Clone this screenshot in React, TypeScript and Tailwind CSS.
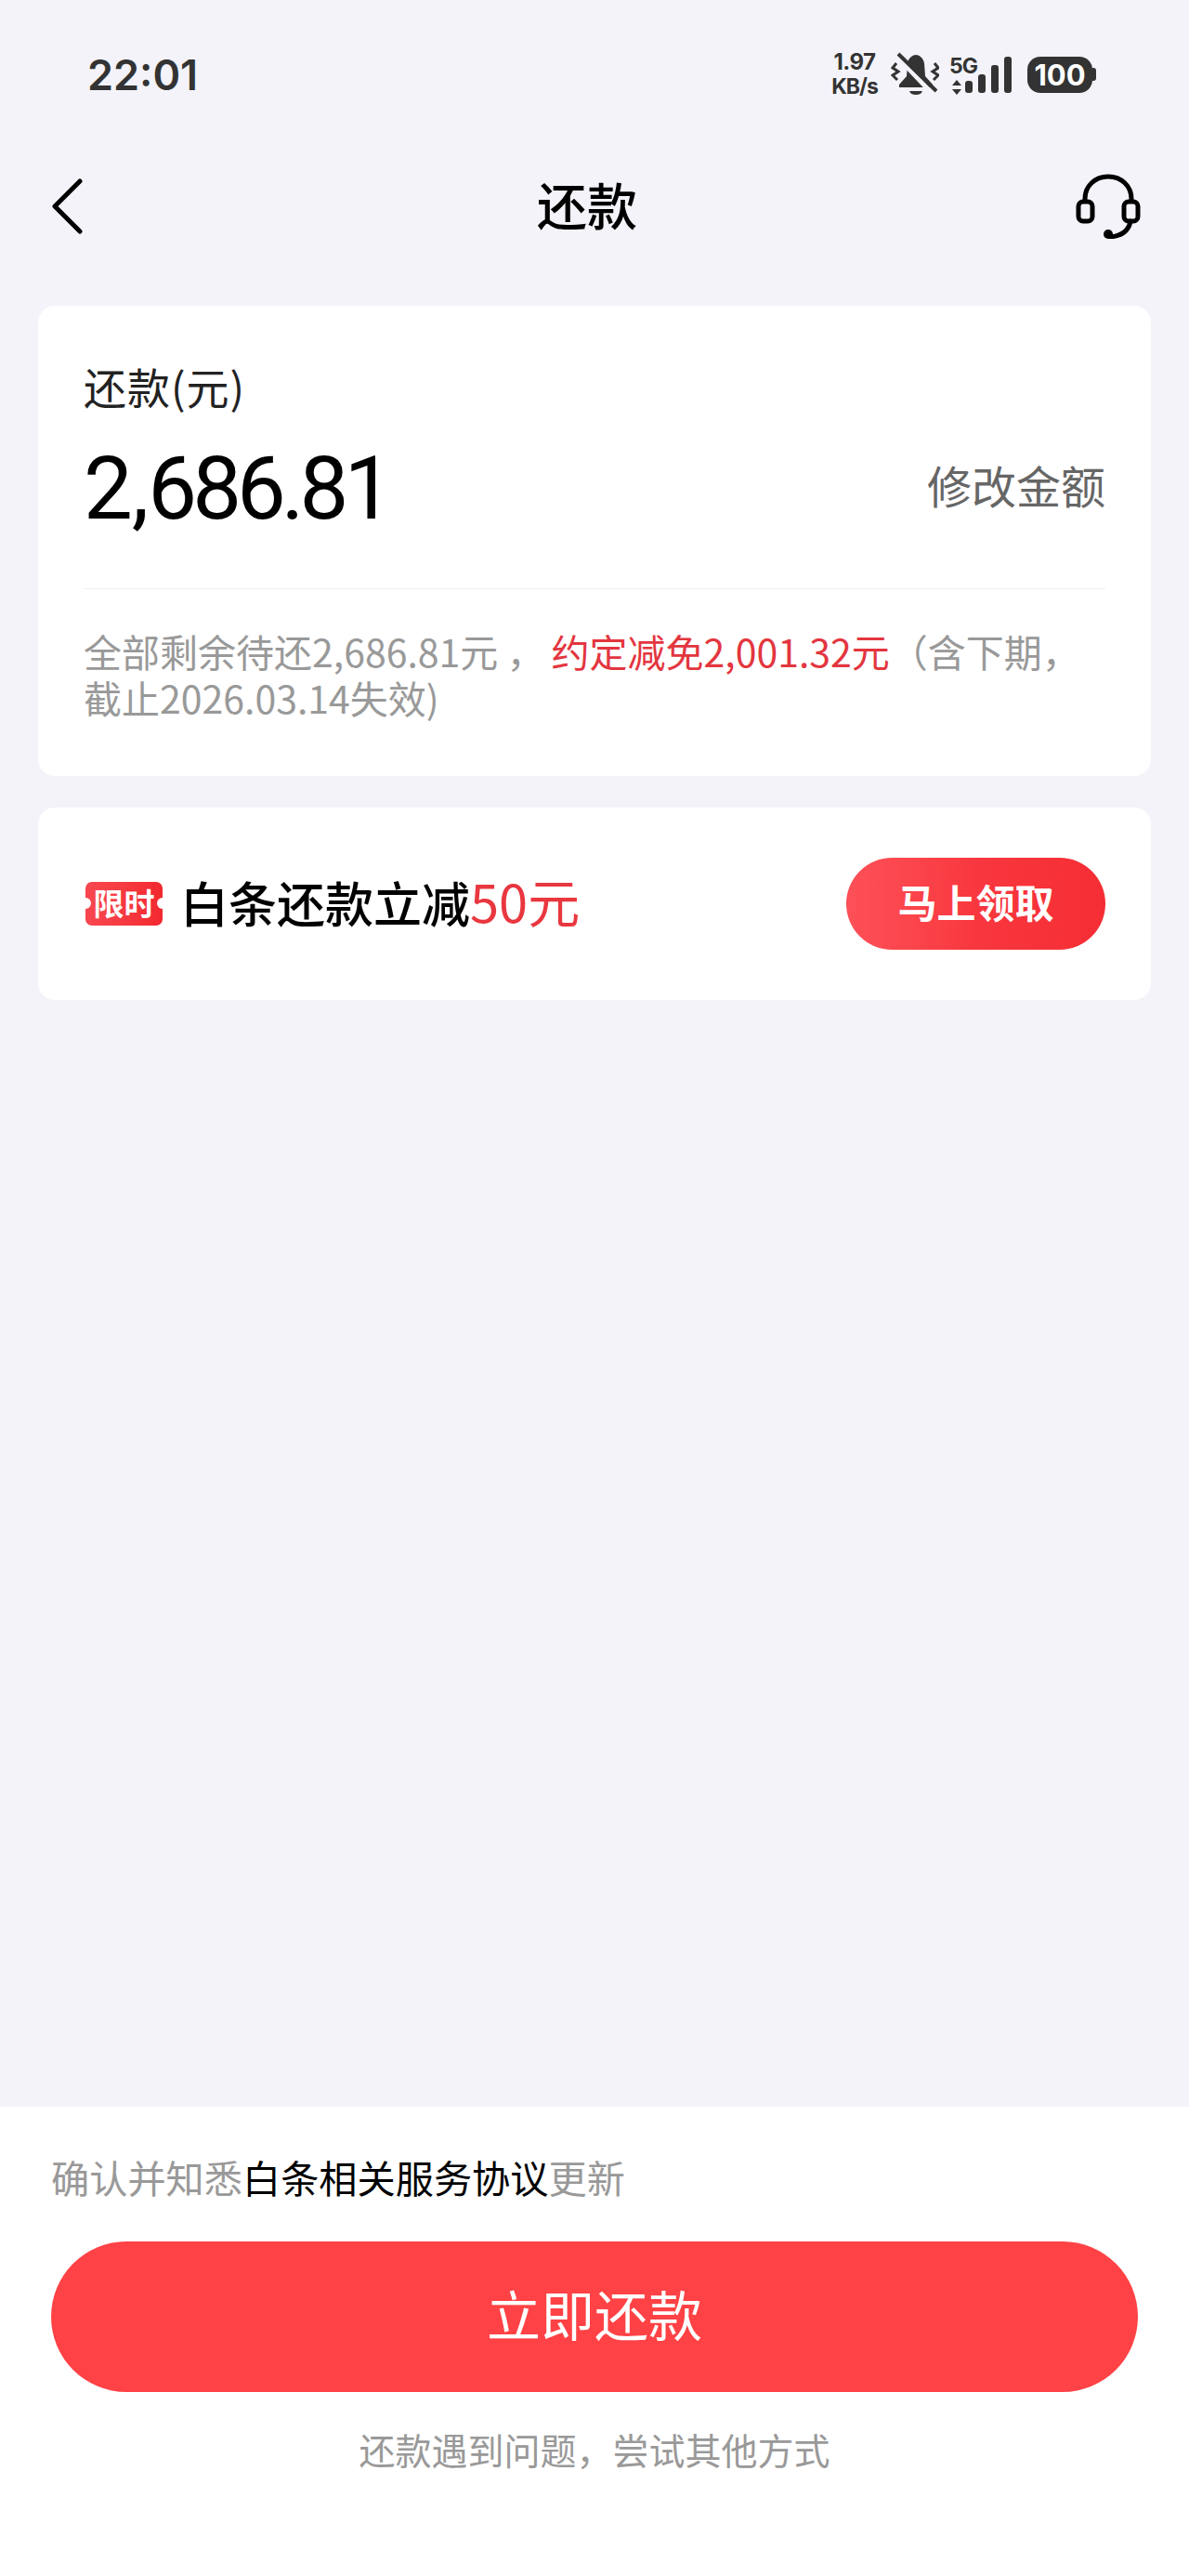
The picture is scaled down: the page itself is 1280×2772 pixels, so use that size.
const cjk = "font-['Noto_Sans_CJK_SC','Noto_Sans',sans-serif]";

function BellOff() {
  return (
    <svg width="52" height="48" viewBox="0 0 52 48" fill="none">
      <path d="M27 3c-3 0-8 3-9 9l-1 14-8 9v3h36v-3l-8-9-1-14c-1-6-6-9-9-9z" fill="#333" />
      <path d="M20 42h14c-1 3-4 4-7 4s-6-1-7-4z" fill="#333" />
      <path d="M3 1l41 43" stroke="#f3f3f9" strokeWidth="5" />
      <path d="M8 2l41 40" stroke="#333" strokeWidth="4" />
      <path d="M6 12l-4 5 6 4-6 4 5 5" stroke="#333" strokeWidth="3" />
      <path d="M47 12l4 5-6 4 6 4-5 5" stroke="#333" strokeWidth="3" />
    </svg>
  );
}

function Signal() {
  return (
    <div className="flex items-end gap-[6px] h-[40px]">
      <div className="w-[8px] h-[13px] rounded-[3px] bg-[#333]" />
      <div className="w-[8px] h-[20px] rounded-[3px] bg-[#333]" />
      <div className="w-[8px] h-[30px] rounded-[3px] bg-[#333]" />
      <div className="w-[8px] h-[39px] rounded-[3px] bg-[#333]" />
    </div>
  );
}

function StatusBar() {
  return (
    <div className="h-[160px] flex items-center justify-between pl-[94px] pr-[100px]">
      <span className="text-[45px] font-semibold text-[#333] font-['Inter',sans-serif] leading-none">22:01</span>
      <div className="flex items-center">
        <div className="w-[50px] flex flex-col items-center font-['Inter',sans-serif] font-bold text-[#333] leading-[26px]">
          <span className="text-[24px] tracking-[-0.5px]">1.97</span>
          <span className="text-[23px] tracking-[-1px] whitespace-nowrap">KB/s</span>
        </div>
        <div className="ml-[14px]">
          <BellOff />
        </div>
        <div className="ml-[11px] w-[17px] flex flex-col font-['Inter',sans-serif] font-bold text-[#333] text-[23px] leading-[24px] tracking-[-1px]">
          <span className="whitespace-nowrap">5G</span>
          <svg width="12" height="16" viewBox="0 0 12 16" className="mt-[3px] ml-[2px]">
            <path d="M6 0l5 6H1zM6 16l-5-6h10z" fill="#333" />
          </svg>
        </div>
        <Signal />
        <div className="ml-[17px] flex items-center">
          <div className="w-[70px] h-[39px] rounded-[14px] bg-[#333] flex items-center justify-center text-white font-['Inter',sans-serif] font-bold text-[31px] leading-none">
            100
          </div>
          <div className="w-[4px] h-[14px] rounded-r-[3px] bg-[#333]" />
        </div>
      </div>
    </div>
  );
}

function NavBar() {
  return (
    <div className="h-[124px] flex items-center justify-between pl-[54px] pr-[52px]">
      <svg width="36" height="60" viewBox="0 0 36 60" fill="none">
        <path d="M32 3L5 30l27 27" stroke="#000" strokeWidth="5" strokeLinecap="round" strokeLinejoin="round" />
      </svg>
      <span className={`${cjk} text-[54px] font-medium text-black leading-none ml-[16px] mb-[4px]`}>还款</span>
      <svg width="70" height="70" viewBox="0 0 70 70" fill="none" stroke="#000" strokeWidth="5">
        <path d="M10 30V27C10 13 21 3 35 3s25 10 25 24v3" />
        <rect x="3" y="30" width="15" height="21" rx="5" />
        <rect x="52" y="30" width="15" height="21" rx="5" />
        <path d="M59 51c-2 11-11 16-22 17" strokeLinecap="round" />
        <circle cx="35" cy="65" r="5" fill="#000" stroke="none" />
      </svg>
    </div>
  );
}

function AmountCard() {
  return (
    <div className={`${cjk} mx-[41px] mt-[45px] bg-white rounded-[18px] pt-[58px] pb-[60px] px-[49px]`}>
      <div className="text-[46px] leading-[56px] text-[#222] tracking-[1px]">还款(元)</div>
      <div className="mt-[33px] h-[100px] flex items-center justify-between">
        <span className="font-['Roboto',sans-serif] text-[94px] leading-none text-black tracking-[-5px]">
          2<span className="mx-[4px]">,</span>686.81
        </span>
        <span className="text-[48px] text-[#666] leading-none mb-[10px]">修改金额</span>
      </div>
      <div className="mt-[57px] h-px bg-[#f0f0f0]" />
      <div className="mt-[41px] text-[41px] leading-[50px] text-[#999]">
        全部剩余待还2,686.81元 <span className="mr-[7px]">，</span>
        <span className="text-[#e3363f]">约定减免2,001.32元</span>（含下期，
        <br />
        截止2026.03.14失效)
      </div>
    </div>
  );
}

function PromoCard() {
  return (
    <div className={`${cjk} mx-[41px] mt-[34px] h-[207px] bg-white rounded-[18px] flex items-center pl-[51px] pr-[49px]`}>
      <div className="relative w-[83px] h-[47px] rounded-[7px] bg-gradient-to-r from-[#f8474f] to-[#f3282f] flex items-center justify-center text-white text-[33px] font-bold leading-none">
        <span className="mb-[3px]">限时</span>
        <span className="absolute left-[-6px] top-[17px] w-[12px] h-[12px] rounded-full bg-white" />
        <span className="absolute right-[-6px] top-[17px] w-[12px] h-[12px] rounded-full bg-white" />
      </div>
      <div className="ml-[19px] mb-[8px] text-[52px] leading-none text-black font-medium">
        白条还款立减<span className="text-[#e9373f] font-normal text-[56px]">50元</span>
      </div>
      <div className="ml-auto w-[279px] h-[99px] rounded-full bg-gradient-to-r from-[#fd5058] via-[#f9373e] to-[#f52d34] flex items-center justify-center text-white text-[42px] font-bold pb-[6px]">
        马上领取
      </div>
    </div>
  );
}

function Footer() {
  return (
    <div className={`${cjk} h-[505px] bg-white px-[55px] pt-[50px]`}>
      <div className="text-[41.2px] leading-[50px] text-[#999]">
        确认并知悉<span className="text-black">白条相关服务协议</span>更新
      </div>
      <div className="mt-[45px] h-[162px] rounded-full bg-[#ff4245] flex items-center justify-center text-white text-[58px] pb-[8px]">
        立即还款
      </div>
      <div className="mt-[36px] text-center text-[39px] leading-[50px] text-[#999]">还款遇到问题，尝试其他方式</div>
    </div>
  );
}

export default function App() {
  return (
    <div className="w-[1280px] h-[2772px] bg-[#f3f3f9] flex flex-col overflow-hidden">
      <StatusBar />
      <NavBar />
      <AmountCard />
      <PromoCard />
      <div className="flex-1" />
      <Footer />
    </div>
  );
}
